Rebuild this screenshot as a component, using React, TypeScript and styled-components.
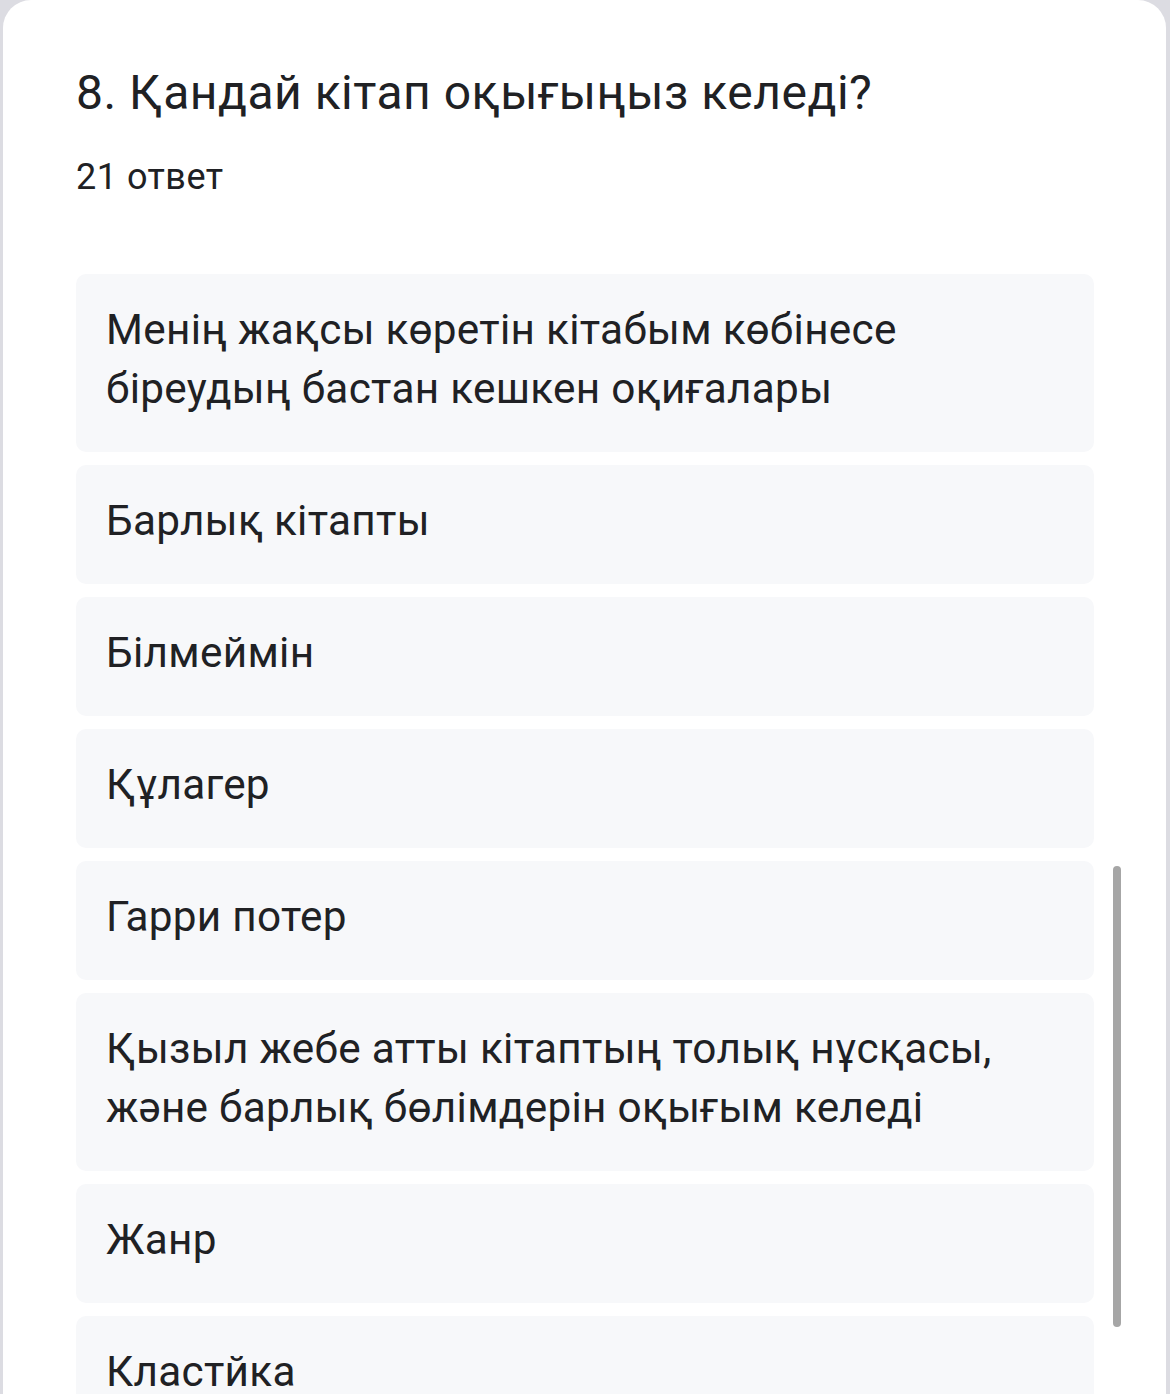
import React from "react";
import styled, { createGlobalStyle } from "styled-components";

const GlobalStyle = createGlobalStyle`
  html, body {
    margin: 0;
    padding: 0;
    background: #dcdce2;
  }
  body {
    font-family: Roboto, "Noto Sans", "Liberation Sans", sans-serif;
    color: #202124;
  }
`;

const Page = styled.div`
  height: 1394px;
  overflow: hidden;
  padding-left: 3px;
  padding-right: 4px;
`;

const Card = styled.div`
  position: relative;
  height: 100%;
  background: #ffffff;
  border-radius: 28px 28px 0 0;
  padding: 62px 72px 0 73px;
  box-sizing: border-box;
  overflow: hidden;
`;

const Title = styled.h1`
  margin: 0;
  font-size: 48px;
  font-weight: 400;
  line-height: 62px;
  letter-spacing: 0.5px;
`;

const Count = styled.div`
  margin-top: 32px;
  font-size: 36px;
  line-height: 42px;
  letter-spacing: 0.5px;
`;

const AnswerList = styled.div`
  margin-top: 76px;
  display: flex;
  flex-direction: column;
  gap: 13px;
`;

const Answer = styled.div`
  background: #f7f8fa;
  border-radius: 10px;
  padding: 26px 30px 34px;
  font-size: 42.3px;
  line-height: 59px;
  letter-spacing: 0.3px;
`;

const ScrollThumb = styled.div`
  position: absolute;
  left: 1110px;
  top: 866px;
  width: 8px;
  height: 461px;
  border-radius: 4px;
  background: #a6a6a6;
`;

const answers = [
  "Менің жақсы көретін кітабым көбінесе біреудың бастан кешкен оқиғалары",
  "Барлық кітапты",
  "Білмеймін",
  "Құлагер",
  "Гарри потер",
  "Қызыл жебе атты кітаптың толық нұсқасы, және барлық бөлімдерін оқығым келеді",
  "Жанр",
  "Кластйка",
];

export default function App() {
  return (
    <Page>
      <GlobalStyle />
      <Card>
        <Title>8. Қандай кітап оқығыңыз келеді?</Title>
        <Count>21 ответ</Count>
        <AnswerList>
          {answers.map((a) => (
            <Answer key={a}>{a}</Answer>
          ))}
        </AnswerList>
        <ScrollThumb />
      </Card>
    </Page>
  );
}
